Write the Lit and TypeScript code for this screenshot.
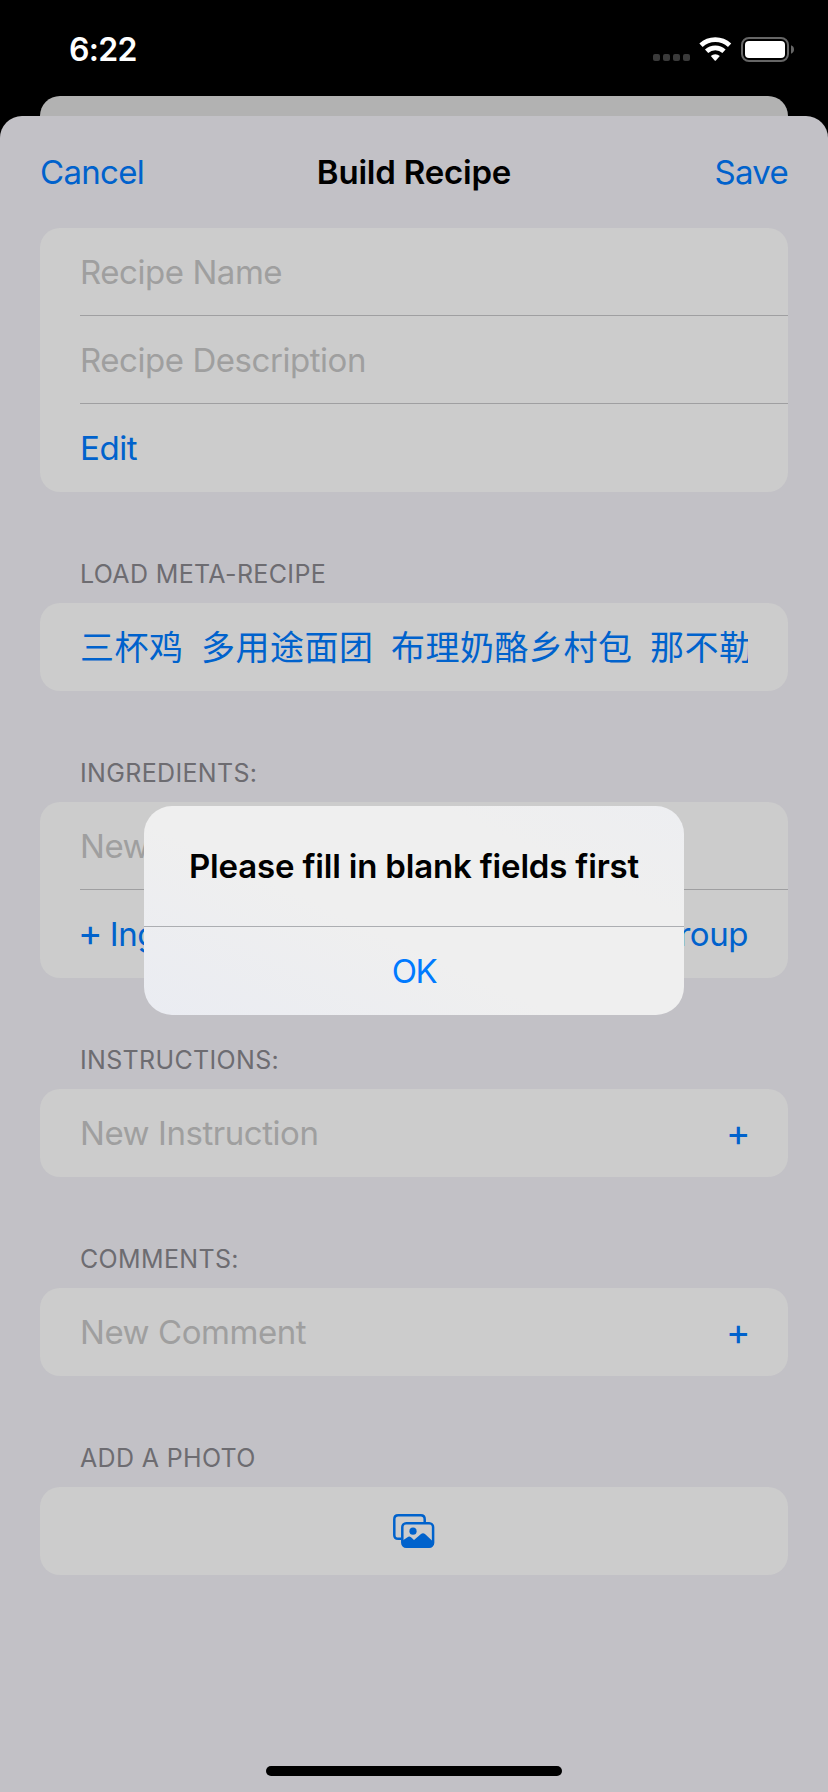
import { LitElement, html, css, nothing } from "lit";
import { customElement, property } from "lit/decorators.js";

@customElement("status-bar")
class StatusBar extends LitElement {
  static styles = css`
    :host { display: flex; justify-content: space-between; height: 96px; padding: 0 34px 0 69px; color: #fff; }
    .time { font-size: 32px; font-weight: 600; line-height: 100px; letter-spacing: -0.7px; }
    .icons { display: flex; align-items: flex-end; height: 62px; }
    .dots { display: flex; gap: 3px; margin: 0 9px 1px 0; }
    .dot { width: 7px; height: 7px; border-radius: 2px; background: #3a3a3a; }
    .wifi { margin-right: 9px; }
    svg { display: block; }
  `;
  render() {
    return html`
      <span class="time">6:22</span>
      <div class="icons">
        <div class="dots">${[0, 1, 2, 3].map(() => html`<i class="dot"></i>`)}</div>
        <svg class="wifi" width="33" height="25" viewBox="0 0 33 25" fill="none" stroke="#fff" stroke-width="4.8">
          <path d="M2 8.3A20.9 20.9 0 0 1 30.6 8.3" />
          <path d="M7.6 14.2A12.9 12.9 0 0 1 25 14.2" />
          <path d="M11.8 18.9A6.8 6.8 0 0 1 20.8 18.9L16.9 23.4Q16.3 24 15.7 23.4Z" fill="#fff" stroke="none" />
        </svg>
        <svg width="53" height="25" viewBox="0 0 53 25">
          <rect x="1" y="1" width="46" height="23" rx="7" fill="none" stroke="#666" stroke-width="2" />
          <rect x="4" y="4" width="40" height="17" rx="4" fill="#fff" />
          <path d="M50 8.3Q53 9.4 53 12.5T50 16.7Z" fill="#666" />
        </svg>
      </div>
    `;
  }
}

@customElement("form-section")
class FormSection extends LitElement {
  @property() heading = "";
  static styles = css`
    :host { display: block; }
    .heading { padding: 67px 0 14px 40px; font-size: 25px; line-height: 30px; letter-spacing: 0.34px; color: #6d6c71; }
    .card { border-radius: 20px; background: #ccc; overflow: hidden; }
  `;
  render() {
    return html`
      ${this.heading ? html`<div class="heading">${this.heading}</div>` : nothing}
      <div class="card"><slot></slot></div>
    `;
  }
}

@customElement("app-root")
class AppRoot extends LitElement {
  static styles = css`
    :host {
      display: flex; flex-direction: column; position: relative; width: 828px; height: 1792px; overflow: hidden;
      background: #000; font-family: Inter, "Noto Sans CJK SC", sans-serif; font-size: 33px; letter-spacing: -0.45px;
    }
    .back { height: 20px; margin: 0 40px; border-radius: 20px 20px 0 0; background: #b2b2b2; }
    .sheet { display: flex; flex-direction: column; flex: 1; padding: 0 40px; border-radius: 22px 22px 0 0; background: #c2c1c6; }
    .nav { display: grid; grid-template-columns: 1fr auto 1fr; height: 112px; line-height: 112px; }
    .title { font-weight: 600; letter-spacing: -0.2px; }
    .cancel, .save { color: #0062cc; letter-spacing: -0.7px; }
    .save { text-align: right; }
    .row { display: flex; justify-content: space-between; height: 88px; line-height: 88px; margin-left: 40px; padding-right: 40px; box-sizing: border-box; white-space: nowrap; }
    .line { border-bottom: 1px solid #9f9fa1; }
    .hint { color: #9f9f9f; }
    .link { color: #0062cc; }
    .plus { font-size: 37px; letter-spacing: -1.5px; line-height: 0; margin-left: -2px; }
    .add { margin-right: -1px; line-height: 90px; }
    .recipes { display: flex; gap: 17.5px; height: 88px; line-height: 86px; margin: 0 40px; overflow: hidden; white-space: nowrap;
      color: #0062cc; font-family: "Noto Sans CJK SC", sans-serif; font-size: 34px; letter-spacing: 0.5px; }
    .photo { display: flex; justify-content: center; align-items: center; height: 88px; }
    .home { width: 296px; height: 10px; margin: auto auto 16px; border-radius: 5px; background: #000; }
    .alert { position: absolute; left: 144px; top: 806px; width: 540px; height: 209px; border-radius: 28px; overflow: hidden; text-align: center;
      background: linear-gradient(25deg, #eaecf2 0%, #efefef 42%, #efefef 75%, #edeef1 100%); }
    .message { height: 120px; line-height: 120px; font-weight: 600; letter-spacing: -0.18px; border-bottom: 1px solid #acaeb2; }
    .ok { height: 88px; line-height: 88px; color: #007aff; letter-spacing: -1.4px; }
  `;
  render() {
    const plus = html`<span class="plus">+</span>`;
    return html`
      <status-bar></status-bar>
      <div class="back"></div>
      <main class="sheet">
        <header class="nav">
          <span class="cancel">Cancel</span><span class="title">Build Recipe</span><span class="save">Save</span>
        </header>
        <form-section>
          <div class="row line hint">Recipe Name</div>
          <div class="row line hint">Recipe Description</div>
          <div class="row link">Edit</div>
        </form-section>
        <form-section heading="LOAD META-RECIPE">
          <div class="recipes">
            ${["三杯鸡", "多用途面团", "布理奶酪乡村包", "那不勒"].map((n) => html`<span>${n}</span>`)}
          </div>
        </form-section>
        <form-section heading="INGREDIENTS:">
          <div class="row line hint">New Ingredient</div>
          <div class="row link"><span>${plus} Ingredient</span><span>${plus} Group</span></div>
        </form-section>
        <form-section heading="INSTRUCTIONS:">
          <div class="row"><span class="hint">New Instruction</span><span class="link add">${plus}</span></div>
        </form-section>
        <form-section heading="COMMENTS:">
          <div class="row"><span class="hint">New Comment</span><span class="link add">${plus}</span></div>
        </form-section>
        <form-section heading="ADD A PHOTO">
          <div class="photo">
            <svg width="42" height="34" viewBox="0 0 42 34" fill="none" stroke="#0062cc" stroke-width="2.5">
              <path d="M8 24.8H5.2Q1.3 24.8 1.3 20.9V5.2Q1.3 1.3 5.2 1.3H27.8Q31.7 1.3 31.7 5.2V8" />
              <rect x="9.3" y="9.3" width="30.8" height="23.4" rx="3.9" />
              <circle cx="20" cy="17.2" r="3.6" fill="#0062cc" stroke="none" />
              <path d="M9 27L14.5 23.2Q16.3 21.7 18 23.3L21 26L28 20Q30 18.4 32 20L40 27.5V29Q40 33 36 33H13Q9 33 9 29Z" fill="#0062cc" stroke="none" />
            </svg>
          </div>
        </form-section>
        <div class="home"></div>
      </main>
      <div class="alert">
        <div class="message">Please fill in blank fields first</div>
        <div class="ok">OK</div>
      </div>
    `;
  }
}
